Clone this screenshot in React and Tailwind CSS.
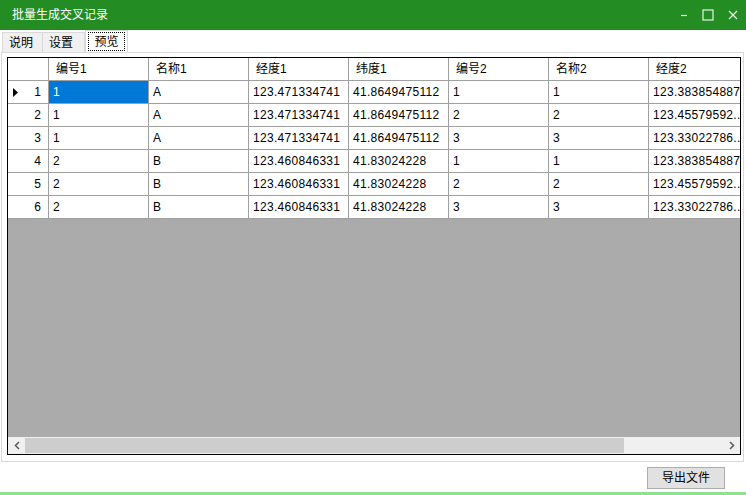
import React from "react";

const cols = ["编号1", "名称1", "经度1", "纬度1", "编号2", "名称2", "经度2"];
const rows = [
  ["1", "A", "123.471334741", "41.8649475112", "1", "1", "123.383854887"],
  ["1", "A", "123.471334741", "41.8649475112", "2", "2", "123.45579592..."],
  ["1", "A", "123.471334741", "41.8649475112", "3", "3", "123.33022786..."],
  ["2", "B", "123.460846331", "41.83024228", "1", "1", "123.383854887"],
  ["2", "B", "123.460846331", "41.83024228", "2", "2", "123.45579592..."],
  ["2", "B", "123.460846331", "41.83024228", "3", "3", "123.33022786..."],
];

export default function App() {
  return (
    <div
      className="w-[746px] h-[495px] bg-white overflow-hidden flex flex-col text-[12px] text-black"
      style={{ fontFamily: '"Liberation Sans", "Noto Sans CJK SC", sans-serif' }}
    >
      {/* Title bar */}
      <div className="h-[30px] shrink-0 bg-[#238c23] flex items-center pl-[12px] pr-[8px] text-white">
        <span className="text-[12px] leading-none">批量生成交叉记录</span>
        <div className="ml-auto flex items-center gap-[14px] text-[#e6f5e6]">
          <svg width="8" height="12" viewBox="0 0 8 12">
            <path d="M1 6.5H7" stroke="currentColor" strokeWidth="1.2" />
          </svg>
          <svg width="12" height="12" viewBox="0 0 12 12">
            <rect x="1" y="1" width="10" height="10" fill="none" stroke="currentColor" strokeWidth="1.2" />
          </svg>
          <svg width="10" height="10" viewBox="0 0 10 10">
            <path d="M1 1L9 9M9 1L1 9" stroke="currentColor" strokeWidth="1.3" />
          </svg>
        </div>
      </div>

      {/* Tab strip */}
      <div className="h-[22px] shrink-0 flex items-end pl-[2px]">
        <div className="h-[20px] w-[41px] bg-[#f0f0f0] border border-b-0 border-[#d9d9d9] flex items-center pl-[6px]">说明</div>
        <div className="h-[20px] w-[42px] bg-[#f0f0f0] border border-b-0 border-l-0 border-[#d9d9d9] flex items-center pl-[6px]">设置</div>
        <div className="h-[22px] w-[43px] bg-white border border-b-0 border-[#d9d9d9] flex items-center justify-center">
          <span className="border border-dotted border-black px-[5px] h-[19px] flex items-center">预览</span>
        </div>
      </div>

      {/* Tab page */}
      <div className="h-[410px] shrink-0 mx-[1px] w-[743px] border border-[#d9d9d9] bg-white pl-[5px] pt-[4px]">
        <div className="w-[734px] h-[398px] border border-black bg-[#ababab] flex flex-col overflow-hidden">
          <div className="flex-1 overflow-hidden">
            {/* header */}
            <div className="flex h-[23px] bg-white w-max">
              <div className="w-[41px] shrink-0 border-r border-b border-[#a0a0a0]" />
              {cols.map((c) => (
                <div key={c} className="w-[100px] shrink-0 border-r border-b border-[#a0a0a0] flex items-center pl-[7px]">
                  {c}
                </div>
              ))}
            </div>
            {rows.map((r, i) => (
              <div key={i} className="flex h-[23px] bg-white w-max">
                <div className="w-[41px] shrink-0 border-r border-b border-[#a0a0a0] flex items-center pr-[7px] relative">
                  {i === 0 && (
                    <svg className="absolute left-[5px] top-[7px]" width="6" height="9" viewBox="0 0 6 9">
                      <path d="M0 0L5 4.5L0 9Z" fill="#000" />
                    </svg>
                  )}
                  <span className="ml-auto">{i + 1}</span>
                </div>
                {r.map((v, j) => (
                  <div
                    key={j}
                    className={
                      "w-[100px] shrink-0 border-r border-b border-[#a0a0a0] flex items-center pl-[4px] whitespace-nowrap overflow-hidden tracking-[0.3px] " +
                      (i === 0 && j === 0 ? "bg-[#0078d7] text-white" : "")
                    }
                  >
                    {v}
                  </div>
                ))}
              </div>
            ))}
          </div>
          {/* horizontal scrollbar */}
          <div className="h-[17px] shrink-0 bg-[#f0f0f0] flex items-center">
            <div className="w-[17px] h-full flex items-center justify-center">
              <svg width="6" height="9" viewBox="0 0 6 9">
                <path d="M5 1L1.5 4.5L5 8" fill="none" stroke="#606060" strokeWidth="1.6" />
              </svg>
            </div>
            <div className="w-[599px] h-[15px] bg-[#cdcdcd]" />
            <div className="flex-1" />
            <div className="w-[17px] h-full flex items-center justify-center">
              <svg width="6" height="9" viewBox="0 0 6 9">
                <path d="M1 1L4.5 4.5L1 8" fill="none" stroke="#606060" strokeWidth="1.6" />
              </svg>
            </div>
          </div>
        </div>
      </div>

      {/* footer */}
      <div className="flex-1 flex flex-col">
        <div className="flex-1 flex justify-end items-start pt-[5px] pr-[21px]">
          <button className="w-[78px] h-[22px] bg-[#e1e1e1] border border-[#adadad] flex items-center justify-center text-[12px]">
            导出文件
          </button>
        </div>
        <div className="h-[3px] bg-[#8fe08f]" />
      </div>
    </div>
  );
}
